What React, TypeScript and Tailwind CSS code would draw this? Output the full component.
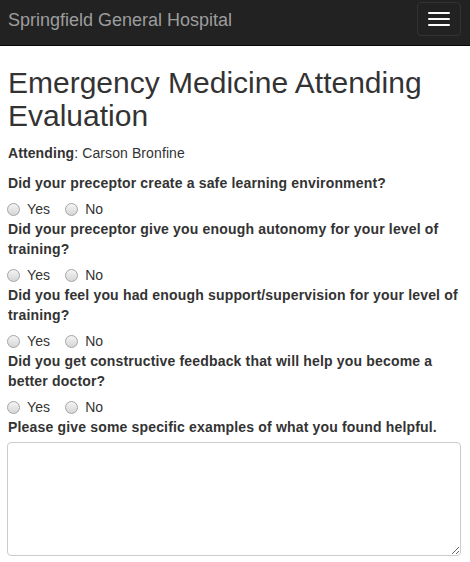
import { useState } from 'react';

const questions = [
  'Did your preceptor create a safe learning environment?',
  'Did your preceptor give you enough autonomy for your level of training?',
  'Did you feel you had enough support/supervision for your level of training?',
  'Did you get constructive feedback that will help you become a better doctor?',
];

function Radio({ checked, onClick, label }: { checked: boolean; onClick: () => void; label: string }) {
  return (
    <label className="flex items-center cursor-pointer mr-[8px]" onClick={onClick}>
      <span className="w-[13px] h-[13px] rounded-full border border-[#a4a4a4] bg-gradient-to-b from-[#f4f4f4] to-[#d6d6d6] flex items-center justify-center ml-[7px] mr-[7px]">
        {checked && <span className="w-[5px] h-[5px] rounded-full bg-[#333]" />}
      </span>
      <span className="font-normal">{label}</span>
    </label>
  );
}

export default function App() {
  const [answers, setAnswers] = useState<Record<number, string>>({});

  return (
    <div className="min-h-screen bg-white text-[#333] text-[14px] leading-[20px] font-['Liberation_Sans',Arial,sans-serif]">
      {/* Navbar */}
      <nav className="h-[46px] bg-[#222] border-b border-[#080808] flex items-center justify-between pl-[8px] pr-[9px]">
        <span className="text-[18px] text-[#9d9d9d] leading-[20px] -mt-[6px]">Springfield General Hospital</span>
        <button className="w-[44px] h-[34px] -mt-[8px] border border-[#333] rounded-[4px] flex flex-col items-center justify-center gap-[4px]">
          <span className="block w-[22px] h-[2px] bg-white rounded-[1px]" />
          <span className="block w-[22px] h-[2px] bg-white rounded-[1px]" />
          <span className="block w-[22px] h-[2px] bg-white rounded-[1px]" />
        </button>
      </nav>

      <div className="px-[8px]">
        <h2 className="text-[30px] leading-[33px] mt-[20px] mb-[11px] font-normal">
          Emergency Medicine Attending Evaluation
        </h2>
        <p className="mb-[10px] tracking-[0.1px]">
          <span className="font-bold">Attending</span>: Carson Bronfine
        </p>

        {questions.map((q, i) => (
          <div key={i}>
            <div className="font-bold mb-[6px] tracking-[0.17px]">{q}</div>
            <div className="flex items-center -ml-[8px] tracking-[0.1px]">
              <Radio label="Yes" checked={answers[i] === 'yes'} onClick={() => setAnswers({ ...answers, [i]: 'yes' })} />
              <Radio label="No" checked={answers[i] === 'no'} onClick={() => setAnswers({ ...answers, [i]: 'no' })} />
            </div>
          </div>
        ))}

        <div className="font-bold mb-[5px] tracking-[0.17px]">Please give some specific examples of what you found helpful.</div>
        <textarea className="block w-[454px] -ml-[1px] h-[114px] border border-[#ccc] rounded-[4px] px-[12px] py-[6px] outline-none" />
      </div>
    </div>
  );
}
